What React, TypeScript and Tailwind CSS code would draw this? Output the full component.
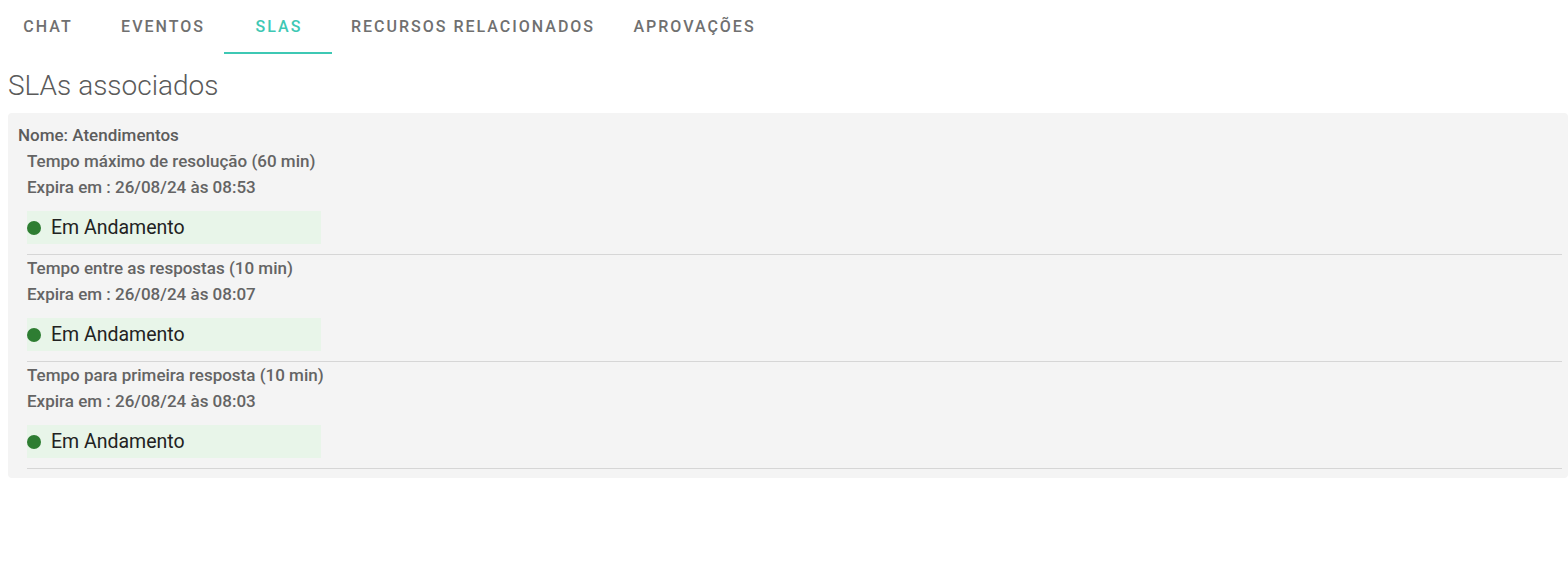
const tabs = [
  { label: 'CHAT', w: 'w-[94px]' },
  { label: 'EVENTOS', w: 'w-[130px] pl-[6px]' },
  { label: 'SLAS', w: 'w-[108px]', active: true },
  { label: 'RECURSOS RELACIONADOS', w: 'w-[280px]' },
  { label: 'APROVAÇÕES', w: 'w-[163px]' },
]

const slas = [
  { name: 'Tempo máximo de resolução (60 min)', expires: '26/08/24 às 08:53' },
  { name: 'Tempo entre as respostas (10 min)', expires: '26/08/24 às 08:07' },
  { name: 'Tempo para primeira resposta (10 min)', expires: '26/08/24 às 08:03' },
]

function StatusChip() {
  return (
    <div className="mt-[11px] mb-[10px] flex h-[33px] w-[294px] items-center bg-[#e8f5e9]">
      <span className="h-[14px] w-[14px] rounded-full bg-[#2e7d32]" />
      <span className="ml-[10px] text-[19.5px] leading-none text-[#222]">Em Andamento</span>
    </div>
  )
}

export default function App() {
  return (
    <div className="min-h-[563px] bg-white font-['Roboto',sans-serif]">
      {/* ── Tabs ── */}
      <div className="flex h-[55px]">
        {tabs.map(t => (
          <div
            key={t.label}
            className={`relative flex items-center justify-center pb-[2px] text-[16px] font-medium tracking-[2px] ${t.w} ${
              t.active ? 'text-[#3ec8b4]' : 'text-[#707070]'
            }`}
          >
            <span className="mr-[-2px]">{t.label}</span>
            {t.active && <span className="absolute bottom-px left-0 right-0 h-[2px] bg-[#3ec8b4]" />}
          </div>
        ))}
      </div>

      {/* ── Title ── */}
      <h2 className="ml-2 mt-[12px] text-[28px] font-light leading-[38px] text-[#5a5a5a]">SLAs associados</h2>

      {/* ── SLA panel ── */}
      <div className="ml-2 mt-[8px] rounded-[4px] bg-[#f4f4f4] pb-[9px] pl-[10px] pr-[6px] pt-[9px]">
        <div className="text-[17px] font-medium leading-[26px] text-[#5c5c5c]">Nome: Atendimentos</div>
        <div className="ml-[9px]">
          {slas.map(s => (
            <div key={s.name} className="border-b border-[#d6d6d6]">
              <div className="text-[17px] font-medium leading-[26px] text-[#646464]">{s.name}</div>
              <div className="text-[17px] font-medium leading-[26px] text-[#646464]">Expira em : {s.expires}</div>
              <StatusChip />
            </div>
          ))}
        </div>
      </div>
    </div>
  )
}
